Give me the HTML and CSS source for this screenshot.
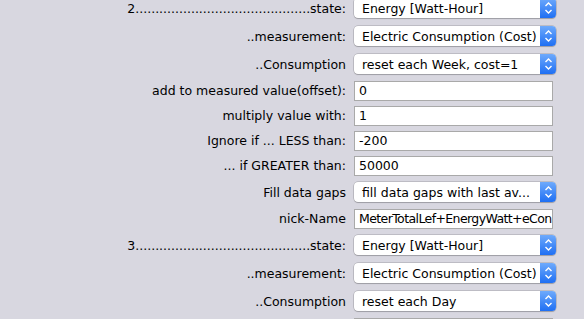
FILE: index.html
```html
<!DOCTYPE html>
<html lang="en">

<head>
  <meta charset="UTF-8">
  <title>Meter settings</title>
  <link rel="stylesheet" href="styles.css">
</head>

<body>
  <div class="form">
    <div class="row row-select">
      <span class="label">2............................................state:</span>
      <div class="select"><span class="select-text">Energy [Watt-Hour]</span><span class="select-arrows"><svg width="9" height="14" viewBox="0 0 9 14"><path d="M1.5 5 L4.5 2 L7.5 5 M1.5 9 L4.5 12 L7.5 9" fill="none" stroke="#fff" stroke-width="1.4"/></svg></span></div>
    </div>
    <div class="row row-select">
      <span class="label">..measurement:</span>
      <div class="select"><span class="select-text">Electric Consumption (Cost)</span><span class="select-arrows"><svg width="9" height="14" viewBox="0 0 9 14"><path d="M1.5 5 L4.5 2 L7.5 5 M1.5 9 L4.5 12 L7.5 9" fill="none" stroke="#fff" stroke-width="1.4"/></svg></span></div>
    </div>
    <div class="row row-select">
      <span class="label">..Consumption</span>
      <div class="select"><span class="select-text">reset each Week, cost=1</span><span class="select-arrows"><svg width="9" height="14" viewBox="0 0 9 14"><path d="M1.5 5 L4.5 2 L7.5 5 M1.5 9 L4.5 12 L7.5 9" fill="none" stroke="#fff" stroke-width="1.4"/></svg></span></div>
    </div>
    <div class="row row-input">
      <span class="label">add to measured value(offset):</span>
      <div class="input">0</div>
    </div>
    <div class="row row-input">
      <span class="label">multiply value with:</span>
      <div class="input">1</div>
    </div>
    <div class="row row-input">
      <span class="label">Ignore if ... LESS than:</span>
      <div class="input">-200</div>
    </div>
    <div class="row row-input">
      <span class="label">... if GREATER than:</span>
      <div class="input">50000</div>
    </div>
    <div class="row row-select">
      <span class="label">Fill data gaps</span>
      <div class="select"><span class="select-text">fill data gaps with last av...</span><span class="select-arrows"><svg width="9" height="14" viewBox="0 0 9 14"><path d="M1.5 5 L4.5 2 L7.5 5 M1.5 9 L4.5 12 L7.5 9" fill="none" stroke="#fff" stroke-width="1.4"/></svg></span></div>
    </div>
    <div class="row row-input">
      <span class="label">nick-Name</span>
      <div class="input input-tight">MeterTotalLef+EnergyWatt+eCon</div>
    </div>
    <div class="row row-select">
      <span class="label">3............................................state:</span>
      <div class="select"><span class="select-text">Energy [Watt-Hour]</span><span class="select-arrows"><svg width="9" height="14" viewBox="0 0 9 14"><path d="M1.5 5 L4.5 2 L7.5 5 M1.5 9 L4.5 12 L7.5 9" fill="none" stroke="#fff" stroke-width="1.4"/></svg></span></div>
    </div>
    <div class="row row-select">
      <span class="label">..measurement:</span>
      <div class="select"><span class="select-text">Electric Consumption (Cost)</span><span class="select-arrows"><svg width="9" height="14" viewBox="0 0 9 14"><path d="M1.5 5 L4.5 2 L7.5 5 M1.5 9 L4.5 12 L7.5 9" fill="none" stroke="#fff" stroke-width="1.4"/></svg></span></div>
    </div>
    <div class="row row-select">
      <span class="label">..Consumption</span>
      <div class="select"><span class="select-text">reset each Day</span><span class="select-arrows"><svg width="9" height="14" viewBox="0 0 9 14"><path d="M1.5 5 L4.5 2 L7.5 5 M1.5 9 L4.5 12 L7.5 9" fill="none" stroke="#fff" stroke-width="1.4"/></svg></span></div>
    </div>
    <div class="row row-input">
      <span class="label"></span>
      <div class="input"></div>
    </div>
  </div>
</body>

</html>
```

FILE: styles.css
```css
body {
  margin: 0;
  background-color: #d8d7e0;
  font-family: "DejaVu Sans", sans-serif;
  font-size: 12.5px;
  color: #000;
  overflow: hidden;
}

.form {
  display: flex;
  flex-direction: column;
  margin-top: -6px;
}

.row {
  display: grid;
  grid-template-columns: 346px 203px;
  column-gap: 8px;
  align-items: center;
}

.row-select {
  height: 28px;
}

.row-input {
  height: 25px;
}

.label {
  text-align: right;
  white-space: nowrap;
  overflow: hidden;
}

.select {
  width: 202px;
  height: 20px;
  box-sizing: border-box;
  background-color: #fff;
  border-radius: 4px;
  box-shadow: 0 0 0 0.5px rgba(0, 0, 0, 0.25), 0 1px 1px rgba(0, 0, 0, 0.16);
  display: flex;
  align-items: center;
  overflow: hidden;
}

.select-text {
  flex: 1;
  padding-left: 8px;
  white-space: nowrap;
  overflow: hidden;
}

.select-arrows {
  width: 16px;
  height: 100%;
  background: linear-gradient(#6eaafc, #1f6ff3);
  display: flex;
  align-items: center;
  justify-content: center;
}

.input {
  width: 199px;
  height: 20px;
  box-sizing: border-box;
  border: 1px solid #a9a9a9;
  background-color: #fff;
  padding-left: 4px;
  line-height: 18px;
  white-space: nowrap;
  overflow: hidden;
}

.input-tight {
  letter-spacing: -0.6px;
}
```
